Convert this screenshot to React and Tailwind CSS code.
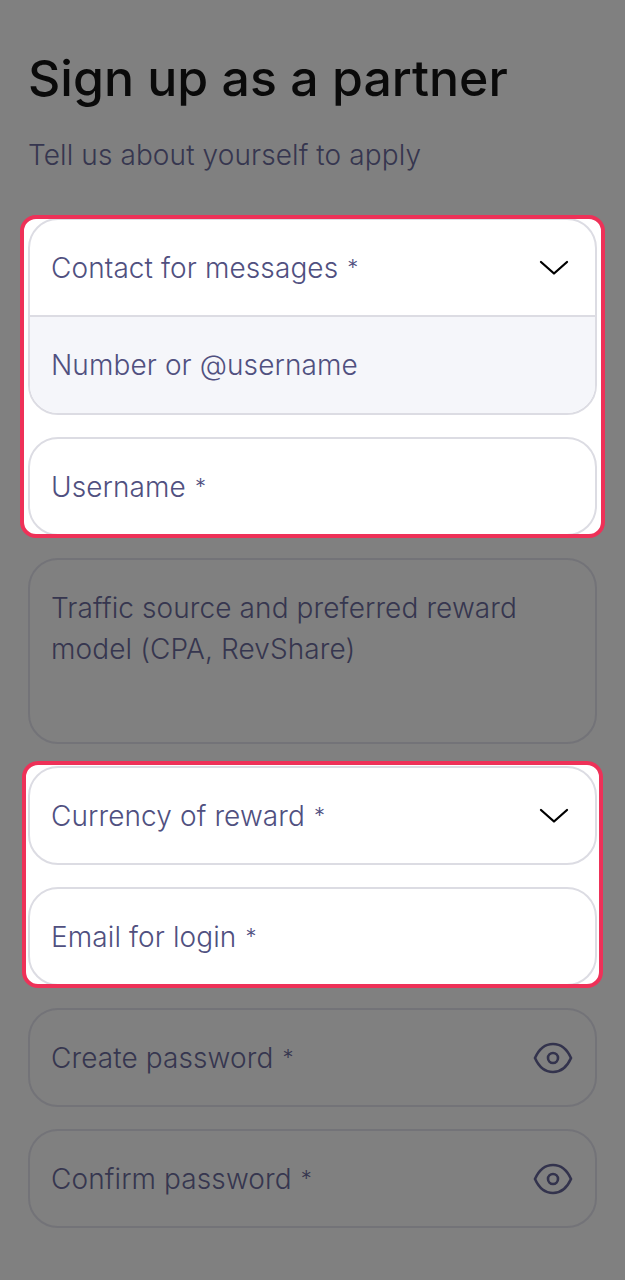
import React from "react";

const Chevron = () => (
  <svg width="30" height="16" viewBox="0 0 30 16" fill="none" className="shrink-0">
    <path d="M2 2 L15 13.5 L28 2" stroke="#000" strokeWidth="2.3" strokeLinecap="round" strokeLinejoin="round" />
  </svg>
);

const Eye = () => (
  <svg width="40" height="32" viewBox="0 0 40 32" fill="none" className="shrink-0">
    <path d="M2 16 C6 7 12 2 20 2 C28 2 34 7 38 16 C34 25 28 30 20 30 C12 30 6 25 2 16 Z" stroke="#33334d" strokeWidth="2.6" />
    <circle cx="20" cy="16" r="5" stroke="#33334d" strokeWidth="2.6" />
  </svg>
);

const Label = ({ children, dim, required }) => (
  <span className={`text-[28px] leading-[41px] font-[350] tracking-[0.1px] ${dim ? "text-[#36364f]" : "text-[#50507f]"}`}>
    {children}
    {required && <span className="ml-[9px] text-[22px] align-[3px]">*</span>}
  </span>
);

const Field = ({ label, icon }) => (
  <div className="h-[99px] rounded-[30px] border-2 border-[#737378] flex items-center justify-between pl-[21px] pr-[22px]">
    <Label dim required>{label}</Label>
    {icon}
  </div>
);

export default function App() {
  return (
    <div className="w-[625px] h-[1280px] bg-[#808080] px-[28px] pt-[47px] overflow-hidden" style={{ fontFamily: "Inter, sans-serif" }}>
      <h1 className="text-[50px] leading-[62px] font-medium text-[#0a0a0a]">Sign up as a partner</h1>
      <p className="mt-[26px] text-[28px] leading-[40px] font-[350] tracking-[0.1px] text-[#36364f]">Tell us about yourself to apply</p>

      <div className="mt-[43px] flex flex-col gap-[22px]">
        {/* Contact and username group */}
        <div className="-mx-[8px] -mt-[3px] -mb-[2px] px-[4px] border-[4px] border-[#ee3158] rounded-[16px] bg-white overflow-hidden flex flex-col gap-[22px]">
          <div className="h-[197px] -mt-[1px] shrink-0 rounded-[30px] border-2 border-[#dcdce3] overflow-hidden flex flex-col">
            <div className="h-[97px] shrink-0 flex items-center justify-between pl-[21px] pr-[26px] border-b-2 border-[#dcdce3]">
              <Label required>Contact for messages</Label>
              <Chevron />
            </div>
            <div className="flex-1 bg-[#f5f6fa] flex items-center pl-[21px]">
              <Label>Number or @username</Label>
            </div>
          </div>
          <div className="-mb-[2px] h-[99px] shrink-0 rounded-[30px] border-2 border-[#dcdce3] flex items-center pl-[21px]">
            <Label required>Username</Label>
          </div>
        </div>

        {/* Traffic source */}
        <div className="h-[186px] rounded-[30px] border-2 border-[#737378] pl-[21px] pr-[22px] pt-[28px]">
          <p className="text-[28px] leading-[41px] font-[350] tracking-[0.1px] text-[#36364f]">Traffic source and preferred reward model (CPA, RevShare)</p>
        </div>

        {/* Currency and email group */}
        <div className="-mx-[6px] -mt-[5px] -mb-[2px] px-[2px] border-[4px] border-[#ee3158] rounded-[16px] bg-white overflow-hidden flex flex-col gap-[22px]">
          <div className="mt-[1px] h-[99px] shrink-0 rounded-[30px] border-2 border-[#dcdce3] flex items-center justify-between pl-[21px] pr-[26px]">
            <Label required>Currency of reward</Label>
            <Chevron />
          </div>
          <div className="-mb-[2px] h-[99px] shrink-0 rounded-[30px] border-2 border-[#dcdce3] flex items-center pl-[21px]">
            <Label required>Email for login</Label>
          </div>
        </div>

        <Field label="Create password" icon={<Eye />} />
        <Field label="Confirm password" icon={<Eye />} />
      </div>
    </div>
  );
}
